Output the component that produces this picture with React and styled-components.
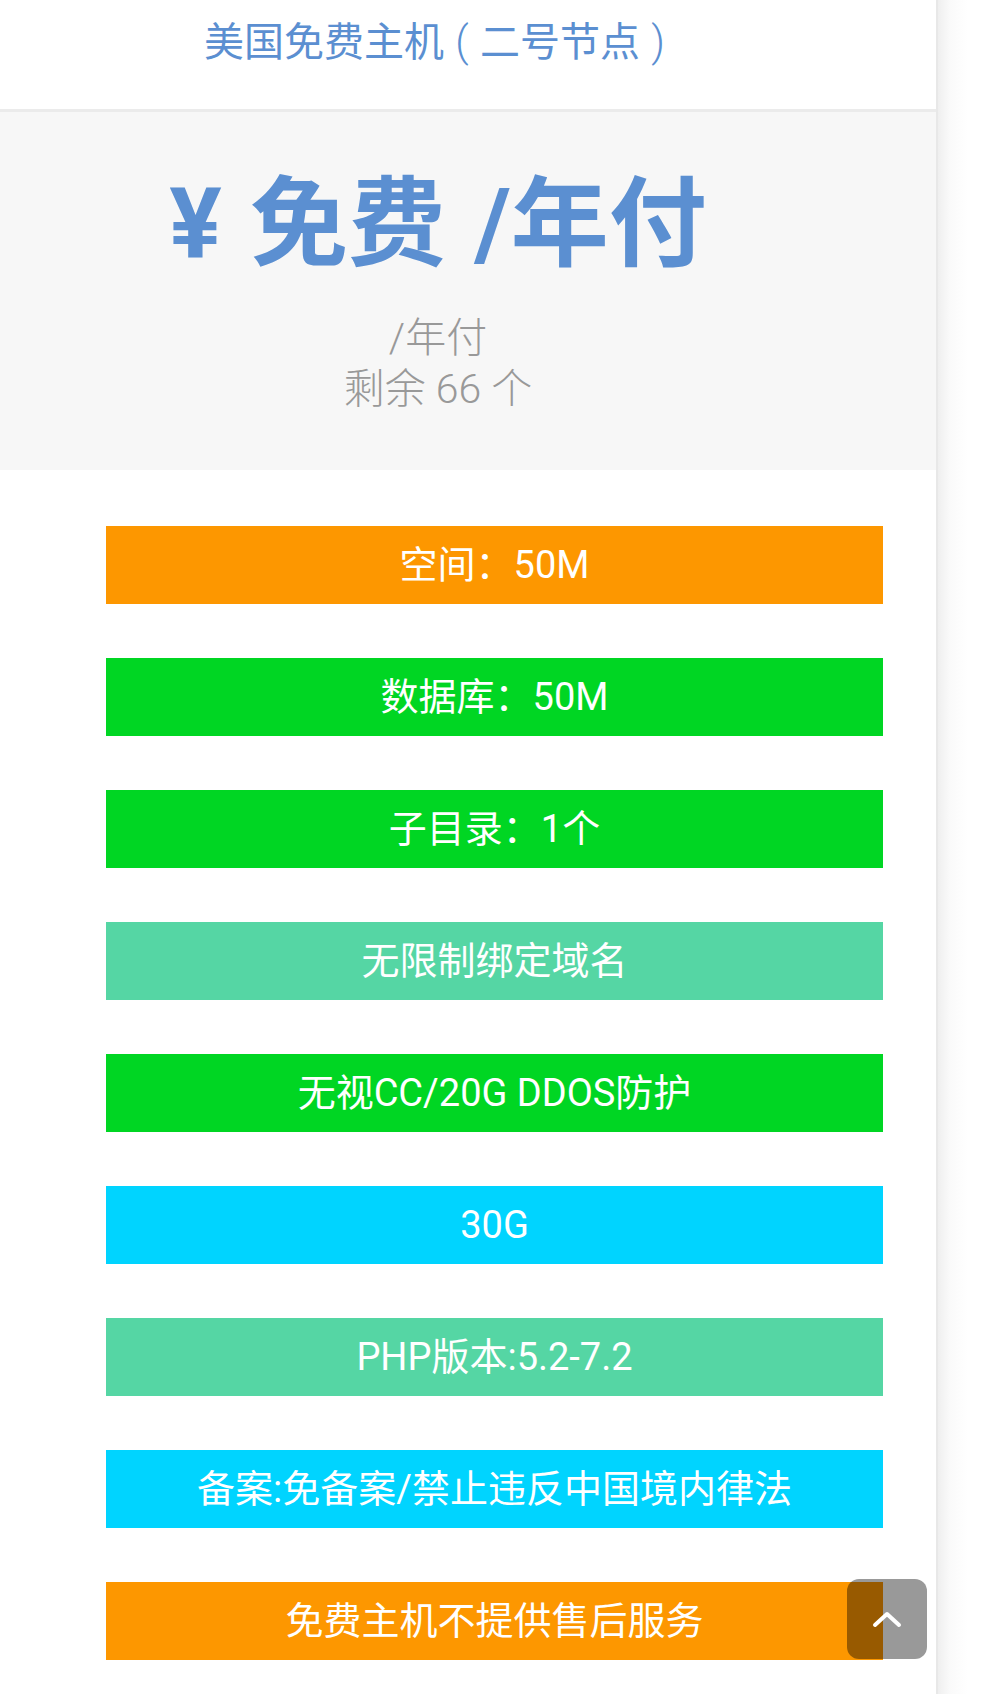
import React from "react";
import styled, { createGlobalStyle } from "styled-components";

const Global = createGlobalStyle`
  html, body { margin: 0; padding: 0; background: #ffffff; }
  body { font-family: Roboto, "Noto Sans CJK SC", "Noto Sans", sans-serif; }
  * { box-sizing: border-box; }
`;

const Page = styled.div`
  display: flex;
  width: 981px;
  min-height: 1694px;
  background: #ffffff;
`;

const Card = styled.div`
  width: 938px;
  flex: none;
  background: #ffffff;
  border-right: 2px solid #e8e8e8;
  box-shadow: 4px 0 14px rgba(0, 0, 0, 0.05);
  padding-bottom: 32px;
`;

const Header = styled.div`
  height: 112px;
  border-bottom: 3px solid #ebebeb;
  padding: 14px 56px 0 0;
  text-align: center;
  font-size: 40px;
  line-height: 56px;
  color: #5b8fd1;
`;

const Paren = styled.span`
  display: inline-block;
  width: 36px;
  text-align: center;
  font-weight: 300;
  font-size: 42px;
`;

const PriceBox = styled.div`
  background: #f7f7f7;
  height: 358px;
  padding: 55px 60px 0 0;
  text-align: center;
`;

const Price = styled.div`
  font-size: 98px;
  font-weight: 700;
  line-height: 115px;
  color: #5b8fd1;
  word-spacing: 4px;
`;

const Sub = styled.div`
  font-size: 41px;
  font-weight: 300;
  line-height: 51px;
  color: #999999;
  margin-top: ${(p) => p.$mt || 0}px;
`;

const List = styled.ul`
  list-style: none;
  margin: 56px 0 0 106px;
  padding: 0;
  width: 777px;
  display: flex;
  flex-direction: column;
  gap: 54px;
`;

const Bar = styled.li`
  height: 78px;
  background: ${(p) => p.$bg};
  color: #ffffff;
  font-size: 38px;
  display: flex;
  align-items: center;
  justify-content: center;
  line-height: 1;
`;

const TopButton = styled.button`
  position: fixed;
  right: 54px;
  bottom: 35px;
  width: 80px;
  height: 80px;
  border: none;
  border-radius: 12px;
  background: rgba(0, 0, 0, 0.4);
  display: flex;
  align-items: center;
  justify-content: center;
  padding: 0;
  cursor: pointer;
`;

const Strip = styled.div`
  flex: 1;
  background: linear-gradient(to right, #efefef 0px, #fafafa 12px, #ffffff 30px);
`;

const ORANGE = "#fd9700";
const GREEN = "#00d623";
const TEAL = "#55d6a4";
const CYAN = "#00d4ff";

const features = [
  ["空间：50M", ORANGE],
  ["数据库：50M", GREEN],
  ["子目录：1个", GREEN],
  ["无限制绑定域名", TEAL],
  ["无视CC/20G DDOS防护", GREEN],
  ["30G", CYAN],
  ["PHP版本:5.2-7.2", TEAL],
  ["备案:免备案/禁止违反中国境内律法", CYAN],
  ["免费主机不提供售后服务", ORANGE],
];

export default function App() {
  return (
    <>
      <Global />
      <Page>
        <Card>
          <Header>
            美国免费主机<Paren>(</Paren>二号节点<Paren>)</Paren>
          </Header>
          <PriceBox>
            <Price>¥ 免费 /年付</Price>
            <Sub $mt={31}>/年付</Sub>
            <Sub>剩余 66 个</Sub>
          </PriceBox>
          <List>
            {features.map(([t, c], i) => (
              <Bar key={i} $bg={c}>
                {t}
              </Bar>
            ))}
          </List>
        </Card>
        <Strip />
      </Page>
      <TopButton aria-label="返回顶部">
        <svg width="30" height="18" viewBox="0 0 30 18" fill="none">
          <path d="M3 15 L15 4 L27 15" stroke="#ffffff" strokeWidth="4" strokeLinecap="round" strokeLinejoin="round" />
        </svg>
      </TopButton>
    </>
  );
}
